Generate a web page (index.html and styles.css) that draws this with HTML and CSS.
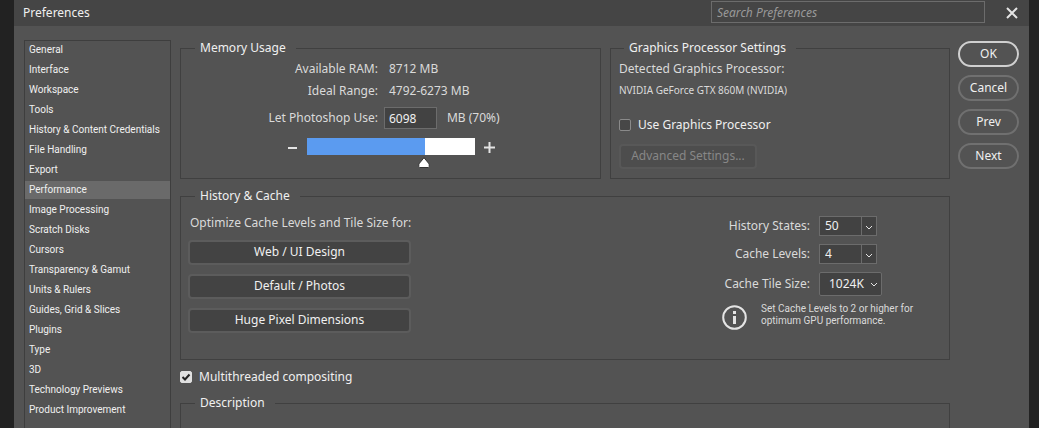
FILE: index.html
```html
<!DOCTYPE html>
<html lang="en">

<head>
  <meta charset="UTF-8" />
  <meta name="viewport" content="width=device-width, initial-scale=1" />
  <title>Preferences</title>
  <link rel="stylesheet" href="styles.css">
</head>

<body>
  <div class="dialog">

    <header class="titlebar">
      <h1>Preferences</h1>
      <input class="search" type="text" placeholder="Search Preferences" aria-label="Search Preferences" />
      <button class="close-btn" aria-label="Close">
        <svg width="12" height="12" viewBox="0 0 12 12"><path d="M1 1l10 10M11 1L1 11" /></svg>
      </button>
    </header>

    <div class="content">

      <!-- Sections -->
      <nav class="sidebar">
        <a href="#">General</a>
        <a href="#">Interface</a>
        <a href="#">Workspace</a>
        <a href="#">Tools</a>
        <a href="#">History &amp; Content Credentials</a>
        <a href="#">File Handling</a>
        <a href="#">Export</a>
        <a href="#" class="active">Performance</a>
        <a href="#">Image Processing</a>
        <a href="#">Scratch Disks</a>
        <a href="#">Cursors</a>
        <a href="#">Transparency &amp; Gamut</a>
        <a href="#">Units &amp; Rulers</a>
        <a href="#">Guides, Grid &amp; Slices</a>
        <a href="#">Plugins</a>
        <a href="#">Type</a>
        <a href="#">3D</a>
        <a href="#">Technology Previews</a>
        <a href="#">Product Improvement</a>
      </nav>

      <main class="panel">
        <div class="top-row">

          <!-- Memory -->
          <fieldset class="memory">
            <legend>Memory Usage</legend>
            <div class="memory-grid">
              <span class="name">Available RAM:</span>
              <span class="value">8712 MB</span>
              <span class="name">Ideal Range:</span>
              <span class="value">4792-6273 MB</span>
              <label class="name" for="ram-input">Let Photoshop Use:</label>
              <span class="ram">
                <input id="ram-input" type="text" value="6098" />
                <span>MB (70%)</span>
              </span>
            </div>
            <div class="slider-row">
              <button class="step-btn" aria-label="Less memory">
                <svg width="11" height="11" viewBox="0 0 11 11"><path d="M1 6h9" /></svg>
              </button>
              <input class="slider" type="range" min="0" max="8712" value="6098" aria-label="Memory" style="--fill: 0.7" />
              <button class="step-btn" aria-label="More memory">
                <svg width="11" height="11" viewBox="0 0 11 11"><path d="M0 5.500h11M5.500 0v11" /></svg>
              </button>
            </div>
          </fieldset>

          <!-- GPU -->
          <fieldset class="gpu">
            <legend>Graphics Processor Settings</legend>
            <p>Detected Graphics Processor:</p>
            <p class="small">NVIDIA GeForce GTX 860M (NVIDIA)</p>
            <label class="check"><input type="checkbox" />Use Graphics Processor</label>
            <button class="btn" disabled>Advanced Settings...</button>
          </fieldset>

        </div>

        <!-- History and cache -->
        <fieldset class="history">
          <legend>History &amp; Cache</legend>
          <div class="history-cols">
            <div class="presets">
              <p>Optimize Cache Levels and Tile Size for:</p>
              <button class="btn">Web / UI Design</button>
              <button class="btn">Default / Photos</button>
              <button class="btn">Huge Pixel Dimensions</button>
            </div>

            <div class="cache">
              <div class="cache-grid">
                <label for="history-states">History States:</label>
                <span class="combo">
                  <input id="history-states" type="text" value="50" />
                  <button aria-label="Choose history states">
                    <svg width="8" height="5" viewBox="0 0 8 5"><path d="M1 1l3 3 3-3" /></svg>
                  </button>
                </span>
                <label for="cache-levels">Cache Levels:</label>
                <span class="combo">
                  <input id="cache-levels" type="text" value="4" />
                  <button aria-label="Choose cache levels">
                    <svg width="8" height="5" viewBox="0 0 8 5"><path d="M1 1l3 3 3-3" /></svg>
                  </button>
                </span>
                <label for="tile-size">Cache Tile Size:</label>
                <select id="tile-size">
                  <option>1024K</option>
                </select>
              </div>
              <div class="note">
                <svg width="25" height="25" viewBox="0 0 25 25">
                  <circle cx="12.500" cy="12.500" r="11.300" />
                  <path d="M11 6h3v3h-3zM11 11h3v8h-3z" />
                </svg>
                <p>Set Cache Levels to 2 or higher for optimum GPU performance.</p>
              </div>
            </div>
          </div>
        </fieldset>

        <label class="check multithread"><input type="checkbox" checked />Multithreaded compositing</label>

        <fieldset class="description">
          <legend>Description</legend>
        </fieldset>
      </main>

      <div class="actions">
        <button class="primary">OK</button>
        <button>Cancel</button>
        <button>Prev</button>
        <button>Next</button>
      </div>

    </div>
  </div>
</body>

</html>
```
FILE: styles.css
```css
* {
  box-sizing: border-box;
}

body {
  margin: 0;
  height: 100vh;
  overflow: hidden;
  padding: 0 10px 0 14px;
  background: #222;
  color: #dadada;
  font: 12px/16px "Noto Sans", sans-serif;
}

button,
input,
select {
  font: inherit;
  color: #f0f0f0;
  margin: 0;
}

button {
  padding: 0;
  background: none;
  border: none;
}

p {
  margin: 0;
}

svg {
  display: block;
  fill: none;
  stroke: #e4e4e4;
}

.dialog {
  height: 100vh;
  display: flex;
  flex-direction: column;
  background: #535353;
}

/* Title bar */
.titlebar {
  display: flex;
  align-items: center;
  flex: none;
  height: 26px;
  padding: 0 11px 0 9px;
  background: #454545;
}

h1 {
  flex: 1;
  margin: 0;
  font-size: 12px;
  font-weight: 400;
  color: #f0f0f0;
}

.search {
  width: 274px;
  height: 22px;
  margin: 0 21px 2px 0;
  padding: 0 5px;
  background: #454545;
  border: 1px solid #6c6c6c;
}

.search::placeholder {
  color: #999;
  font-style: italic;
}

.close-btn svg {
  stroke-width: 2;
}

.content {
  flex: 1;
  min-height: 0;
  display: flex;
  padding: 14px 10px 0;
}

/* Sidebar */
.sidebar {
  flex: none;
  width: 147px;
  margin-right: 9px;
  border: 1px solid #3e3e3e;
  border-bottom: none;
}

.sidebar a {
  display: block;
  height: 18px;
  margin-bottom: 2px;
  padding-left: 4px;
  font-family: Roboto, sans-serif;
  font-size: 10px;
  line-height: 18px;
  white-space: nowrap;
  color: #f0f0f0;
  text-decoration: none;
}

.sidebar a.active {
  background: #6a6a6a;
}

/* Groups */
.panel {
  flex: 1;
  min-width: 0;
  display: flex;
  flex-direction: column;
}

fieldset {
  margin: 0;
  padding: 0;
  border: 1px solid #404040;
}

legend {
  margin-left: 14px;
  padding: 0 10px 0 5px;
  color: #f0f0f0;
}

.top-row {
  display: grid;
  grid-template-columns: 421fr 340fr;
  gap: 9px;
}

.memory {
  height: 139px;
}

.gpu {
  padding-left: 8px;
}

.gpu legend {
  margin-left: 5px;
}

/* Memory */
.memory-grid {
  display: grid;
  grid-template-columns: 47% 1fr;
  grid-template-rows: 22px 22px 32px;
  align-items: center;
  column-gap: 6px;
  padding-top: 2px;
}

.name {
  text-align: right;
}

.value {
  padding-left: 5px;
}

.ram {
  display: flex;
  align-items: center;
  gap: 10px;
}

.ram input {
  width: 53px;
  height: 22px;
  padding: 0 4px;
  background: #424242;
  border: 1px solid #6c6c6c;
}

.slider-row {
  display: flex;
  justify-content: center;
  gap: 3px;
  padding-top: 4px;
}

.step-btn {
  height: 18px;
}

.step-btn svg {
  stroke-width: 2;
}

.slider {
  appearance: none;
  width: 180px;
  height: 31px;
  background: none;
}

/* The track is inset by half a thumb on both ends */
.slider::-webkit-slider-runnable-track {
  height: 31px;
  --stop: calc(6px + (100% - 12px) * var(--fill));
  background: linear-gradient(to right, transparent 6px, #5b9bf0 6px, #5b9bf0 var(--stop), #fff var(--stop), #fff calc(100% - 6px), transparent calc(100% - 6px)) top / 100% 17px no-repeat;
}

.slider::-webkit-slider-thumb {
  appearance: none;
  width: 12px;
  height: 11px;
  margin-top: 19px;
  background: url("data:image/svg+xml,%3Csvg xmlns='http://www.w3.org/2000/svg' viewBox='0 0 12 11'%3E%3Cpath d='M6 .7L11.200 7v2.500l-1 1H1.800l-1-1V7z' fill='%23fff' stroke='%23333'/%3E%3C/svg%3E");
}

/* Graphics processor */
.gpu p {
  padding-top: 5px;
}

.gpu .small {
  font-size: 10px;
}

.check {
  display: flex;
  align-items: center;
  gap: 7px;
  color: #f0f0f0;
}

.check input {
  appearance: none;
  width: 12px;
  height: 12px;
  background: #474747;
  border: 1px solid #8a8a8a;
  border-radius: 2px;
}

.check input:checked {
  border-color: #e0e0e0;
  background: #e0e0e0 url("data:image/svg+xml,%3Csvg xmlns='http://www.w3.org/2000/svg' viewBox='0 0 10 10'%3E%3Cpath d='M1.500 5l2.500 2.500 4.500-5' fill='none' stroke='%23222' stroke-width='2'/%3E%3C/svg%3E");
}

.gpu .check {
  margin: 19px 0 11px;
}

.btn {
  height: 25px;
  padding-bottom: 1px;
  line-height: 20px;
  background: #434343;
  border: 2px solid #5c5c5c;
  border-radius: 4px;
}

.btn:disabled {
  width: 138px;
  background: #4d4d4d;
  border-color: #585858;
  color: #878787;
}

/* History and cache */
.history {
  height: 172px;
  margin-top: 9px;
}

.history-cols {
  display: flex;
  justify-content: space-between;
  padding: 11px 35px 0 7px;
}

.presets {
  display: flex;
  flex-direction: column;
  gap: 9px;
  width: 223px;
}

.presets p {
  padding-left: 2px;
  white-space: nowrap;
}

.cache {
  width: 192px;
}

.cache-grid {
  display: grid;
  grid-template-columns: 88px 1fr;
  grid-template-rows: 20px 20px 24px;
  align-items: center;
  gap: 8px 9px;
  padding-top: 1px;
}

.cache-grid label {
  text-align: right;
  white-space: nowrap;
}

.combo {
  display: flex;
  width: 58px;
  height: 20px;
  background: #424242;
  border: 1px solid #6c6c6c;
}

.combo input {
  width: 42px;
  padding: 0 5px;
  background: none;
  border: none;
  border-right: 1px solid #6c6c6c;
}

.combo button {
  flex: 1;
  display: grid;
  place-items: center;
  padding-top: 3px;
}

select {
  appearance: none;
  width: 63px;
  height: 24px;
  padding: 0 0 0 9px;
  border: 1px solid #6c6c6c;
  border-radius: 2px;
  background: #424242 url("data:image/svg+xml,%3Csvg xmlns='http://www.w3.org/2000/svg' width='8' height='5'%3E%3Cpath d='M1 1l3 3 3-3' fill='none' stroke='%23e4e4e4'/%3E%3C/svg%3E") right 3px center no-repeat;
}

.note {
  display: flex;
  gap: 14px;
  padding-top: 7px;
}

.note svg {
  flex: none;
  margin-top: 2px;
}

.note circle {
  stroke-width: 2;
}

.note path {
  fill: #e4e4e4;
  stroke: none;
}

.note p {
  font-family: Roboto, sans-serif;
  font-size: 10px;
  line-height: 12px;
}

.multithread {
  margin: 9px 0 10px;
}

.description {
  flex: 1;
  border-bottom: none;
}

/* Dialog buttons */
.actions {
  flex: none;
  display: flex;
  flex-direction: column;
  gap: 8px;
  width: 61px;
  margin-left: 8px;
  padding-top: 1px;
}

.actions button {
  height: 26px;
  border: 2px solid #707070;
  border-radius: 13px;
}

.actions .primary {
  border-color: #d0d0d0;
}
```
